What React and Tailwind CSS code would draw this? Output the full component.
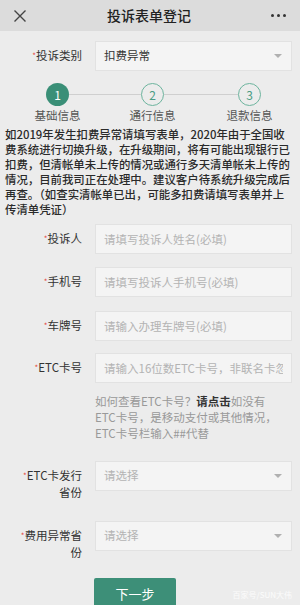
import React from 'react';

const font = { fontFamily: '"Noto Sans CJK SC", "Noto Sans", sans-serif' };

function Label({ children }) {
  return (
    <div className="w-[82px] shrink-0 pt-[6px] text-right text-[11.5px] leading-[17px] text-[#333]">
      {children}
    </div>
  );
}

function Star() {
  return <span className="text-[8px] align-top text-[#e5483e]">*</span>;
}

function TextField({ placeholder }) {
  return (
    <input
      type="text"
      placeholder={placeholder}
      className="ml-[13px] h-[30px] w-[197px] border border-[#e2e2e2] bg-[#f4f4f4] px-[8px] text-[11.5px] text-[#333] outline-none placeholder:text-[#b3b3b3]"
    />
  );
}

function SelectBox({ value, placeholder }) {
  return (
    <div className="ml-[13px] flex h-[30px] w-[197px] items-center justify-between border border-[#e2e2e2] bg-[#f4f4f4] pl-[8px] pr-[9px] text-[11.5px]">
      <span className={value ? 'text-[#333]' : 'text-[#b3b3b3]'}>{value || placeholder}</span>
      <span className="h-0 w-0 border-x-[4px] border-t-[4px] border-x-transparent border-t-[#b0b0b0]" />
    </div>
  );
}

function Step({ num, label, active }) {
  return (
    <div className="flex w-[23px] flex-col items-center">
      <div
        className={
          active
            ? 'flex h-[23px] w-[23px] items-center justify-center rounded-full bg-[#3a8f77] text-[12px] text-white'
            : 'flex h-[23px] w-[23px] items-center justify-center rounded-full border-[1.5px] border-[#6db49e] text-[12px] text-[#4a9c84]'
        }
      >
        {num}
      </div>
      <div className="mt-[1px] whitespace-nowrap text-[11.5px] leading-[16px] text-[#555]">{label}</div>
    </div>
  );
}

export default function App() {
  return (
    <div className="relative h-[605px] w-[300px] overflow-hidden bg-[#ececec]" style={font}>
      {/* title bar */}
      <div className="flex h-[31px] items-center justify-between bg-[#dcdcdc] pl-[13px] pr-[14px]">
        <svg width="14" height="14" viewBox="0 0 14 14" className="text-[#444]">
          <path d="M1.5 1.5 L12.5 12.5 M12.5 1.5 L1.5 12.5" stroke="currentColor" strokeWidth="1.4" />
        </svg>
        <div className="text-[14px] font-medium text-[#222]">投诉表单登记</div>
        <div className="flex gap-[3px]">
          <span className="h-[3px] w-[3px] rounded-full bg-[#333]" />
          <span className="h-[3px] w-[3px] rounded-full bg-[#333]" />
          <span className="h-[3px] w-[3px] rounded-full bg-[#333]" />
        </div>
      </div>

      <div className="mt-[10px] flex items-start">
        <Label>
          <Star />投诉类别
        </Label>
        <SelectBox value="扣费异常" />
      </div>

      {/* steps */}
      <div className="mt-[12px] flex items-start pl-[46px]">
        <Step num="1" label="基础信息" active />
        <div className="mt-[11px] h-px w-[72px] bg-[#cfcfcf]" />
        <Step num="2" label="通行信息" />
        <div className="mt-[11px] h-px w-[74px] bg-[#cfcfcf]" />
        <Step num="3" label="退款信息" />
      </div>

      <div className="mt-[4px] whitespace-nowrap px-[5px] text-[11.4px] font-medium leading-[15px] text-[#2a2a2a]">
        如2019年发生扣费异常请填写表单，2020年由于全国收
        <br />
        费系统进行切换升级，在升级期间，将有可能出现银行已
        <br />
        扣费，但清帐单未上传的情况或通行多天清单帐未上传的
        <br />
        情况，目前我司正在处理中。建议客户待系统升级完成后
        <br />
        再查。（如查实清帐单已出，可能多扣费请填写表单并上
        <br />
        传清单凭证）
      </div>

      <div className="mt-[7px] flex items-start">
        <Label>
          <Star />投诉人
        </Label>
        <TextField placeholder="请填写投诉人姓名(必填)" />
      </div>
      <div className="mt-[13px] flex items-start">
        <Label>
          <Star />手机号
        </Label>
        <TextField placeholder="请填写投诉人手机号(必填)" />
      </div>
      <div className="mt-[14px] flex items-start">
        <Label>
          <Star />车牌号
        </Label>
        <TextField placeholder="请输入办理车牌号(必填)" />
      </div>
      <div className="mt-[12px] flex items-start">
        <Label>
          <Star />ETC卡号
        </Label>
        <TextField placeholder="请输入16位数ETC卡号，非联名卡忽略" />
      </div>
      <div className="ml-[95px] mt-[10px] text-[11.5px] leading-[16px] text-[#999]">
        如何查看ETC卡号？<span className="font-bold text-[#333]">请点击</span>如没有
        <br />
        ETC卡号，是移动支付或其他情况，
        <br />
        ETC卡号栏输入##代替
      </div>

      <div className="mt-[20px] flex items-start">
        <Label>
          <Star />ETC卡发行
          <br />
          省份
        </Label>
        <SelectBox placeholder="请选择" />
      </div>
      <div className="mt-[20px] flex items-start">
        <Label>
          <Star />费用异常省
          <br />
          份
        </Label>
        <SelectBox placeholder="请选择" />
      </div>

      <button className="ml-[94px] mt-[17px] flex h-[32px] w-[82px] items-center justify-center rounded-[2px] bg-[#3d8f78] text-[13px] text-white">
        下一步
      </button>

      <div className="absolute bottom-[4px] right-[8px] text-[8px] text-white/80">百家号/SUN大伟</div>
    </div>
  );
}
